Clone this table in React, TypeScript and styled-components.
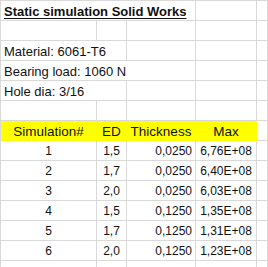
import React from "react";
import styled, { createGlobalStyle } from "styled-components";

const Global = createGlobalStyle`
  html, body { margin: 0; padding: 0; background: #ffffff; }
  body { font-family: "Liberation Sans", Arial, sans-serif; color: #111; }
`;

const Sheet = styled.div`
  display: grid;
  grid-template-columns: 96px 30px 69px 61px 1fr;
  grid-auto-rows: 20px;
  width: 268px;
  height: 267px;
  overflow: hidden;
  border-left: 1px solid #d9d9d9;
  border-top: 1px solid #d9d9d9;
  box-sizing: border-box;
`;

type CellProps = {
  $span?: number;
  $align?: "left" | "center" | "right";
  $fill?: string;
  $bold?: boolean;
  $underline?: boolean;
  $size?: number;
};

const Cell = styled.div<CellProps>`
  box-sizing: border-box;
  grid-column: span ${(p) => p.$span ?? 1};
  border-right: 1px solid ${(p) => (p.$fill ? p.$fill : "#d9d9d9")};
  border-bottom: 1px solid ${(p) => (p.$fill ? p.$fill : "#d9d9d9")};
  background: ${(p) => p.$fill ?? "transparent"};
  display: flex;
  align-items: center;
  justify-content: ${(p) =>
    p.$align === "right" ? "flex-end" : p.$align === "center" ? "center" : "flex-start"};
  padding: 1px 3px 0 3px;
  font-family: "Liberation Sans", Arial, sans-serif;
  font-size: ${(p) => p.$size ?? 13}px;
  font-weight: ${(p) => (p.$bold ? 700 : 400)};
  text-decoration: ${(p) => (p.$underline ? "underline" : "none")};
  text-underline-offset: 2px;
  white-space: nowrap;
  color: #111;
`;

const YELLOW = "#ffff00";

const rows = [
  ["1", "1,5", "0,0250", "6,76E+08"],
  ["2", "1,7", "0,0250", "6,40E+08"],
  ["3", "2,0", "0,0250", "6,03E+08"],
  ["4", "1,5", "0,1250", "1,35E+08"],
  ["5", "1,7", "0,1250", "1,31E+08"],
  ["6", "2,0", "0,1250", "1,23E+08"],
];

const Empty = () => (
  <>
    <Cell />
    <Cell />
    <Cell />
    <Cell />
    <Cell />
  </>
);

export default function App() {
  return (
    <>
      <Global />
      <Sheet>
        <Cell $span={3} $bold $underline>
          Static simulation Solid Works
        </Cell>
        <Cell />
        <Cell />

        <Empty />

        <Cell $span={2}>Material: 6061-T6</Cell>
        <Cell />
        <Cell />
        <Cell />

        <Cell $span={3}>Bearing load: 1060 N</Cell>
        <Cell />
        <Cell />

        <Cell $span={2}>Hole dia: 3/16</Cell>
        <Cell />
        <Cell />
        <Cell />

        <Empty />

        <Cell $fill={YELLOW} $align="center" $size={13.5}>Simulation#</Cell>
        <Cell $fill={YELLOW} $align="center" $size={13.5}>ED</Cell>
        <Cell $fill={YELLOW} $align="center" $size={13.5}>Thickness</Cell>
        <Cell $fill={YELLOW} $align="center" $size={13.5}>Max</Cell>
        <Cell />

        {rows.map((r) => (
          <React.Fragment key={r[0]}>
            <Cell $size={12} $align="center">{r[0]}</Cell>
            <Cell $size={12} $align="center">{r[1]}</Cell>
            <Cell $size={12} $align="right">{r[2]}</Cell>
            <Cell $size={12} $align="center">{r[3]}</Cell>
            <Cell />
          </React.Fragment>
        ))}

        <Empty />
      </Sheet>
    </>
  );
}
